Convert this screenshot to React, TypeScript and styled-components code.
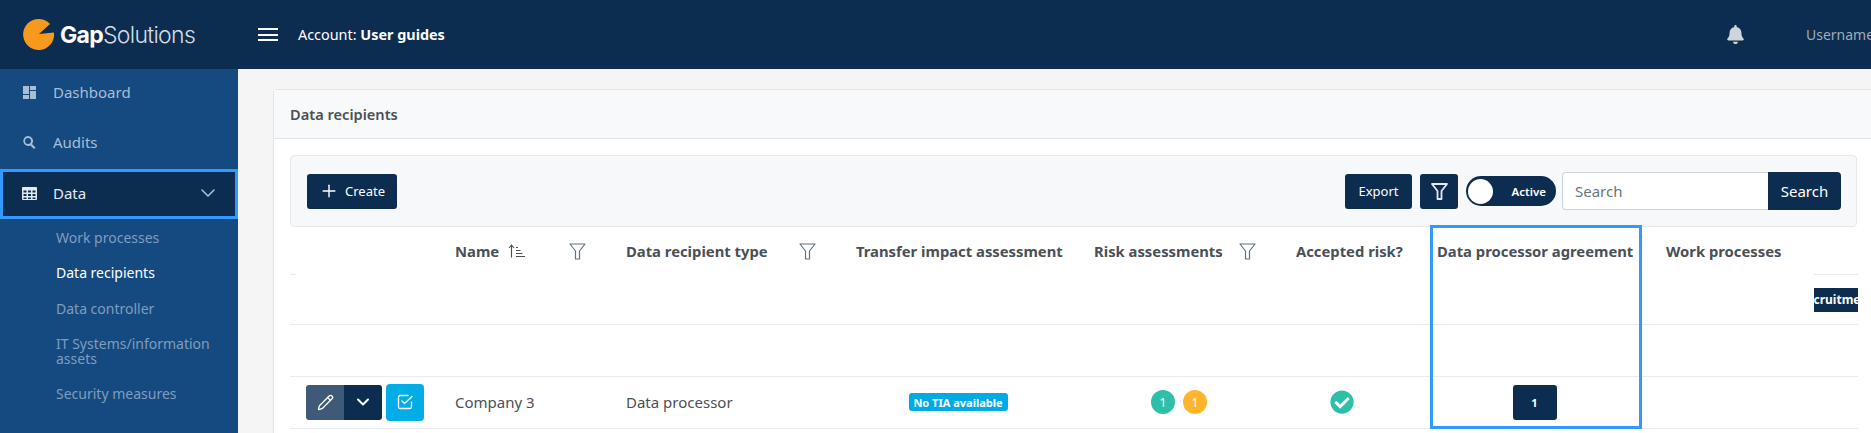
import React, { ReactElement } from 'react';
import styled, { createGlobalStyle } from 'styled-components';
import { FaBell, FaCheckCircle } from 'react-icons/fa';
import { ChevronDown, Pencil, Plus } from 'lucide-react';

const navy = '#0c2d50';
const line = '#e9ecef';

const GlobalStyle = createGlobalStyle`
  html, body {
    margin: 0;
    height: 433px;
    overflow: hidden;
    background: #f5f5f5;
    font-family: "Noto Sans", "Open Sans", sans-serif;
  }
  * { box-sizing: border-box; }
`;

const Page = styled.div`
  width: 1871px;
  height: 433px;
  overflow: hidden;
  display: flex;
  flex-direction: column;
`;

const TopBar = styled.header`
  height: 69px;
  flex: none;
  display: flex;
  align-items: center;
  background: ${navy};
  color: #fff;
`;

const Brand = styled.div`
  width: 258px;
  flex: none;
  display: flex;
  align-items: center;
  gap: 6px;
  padding-left: 23px;
`;

const BrandText = styled.span`
  font-family: Inter, sans-serif;
  font-size: 23px;
  font-weight: 300;
  letter-spacing: -0.7px;
  color: #d5dce4;
  b { font-weight: 700; color: #fff; }
`;

const Burger = styled.button`
  width: 20px;
  height: 13px;
  padding: 0;
  border: 0;
  border-top: 2px solid #fff;
  border-bottom: 2px solid #fff;
  background: linear-gradient(#fff, #fff) center / 100% 2px no-repeat;
`;

const Account = styled.div`
  margin-left: 20px;
  font-size: 14.4px;
  b { font-weight: 700; }
`;

const Spacer = styled.div`
  flex: 1;
`;

const Bell = styled.span`
  display: flex;
  color: #cfd5dd;
  font-size: 19px;
`;

const UserName = styled.span`
  width: 65px;
  margin-left: 61px;
  flex: none;
  overflow: hidden;
  white-space: nowrap;
  font-size: 14px;
  color: #9eabbb;
`;

const Body = styled.div`
  flex: 1;
  display: flex;
  min-height: 0;
`;

const Sidebar = styled.aside`
  width: 238px;
  flex: none;
  background: #154a80;
  overflow: hidden;
`;

const NavItem = styled.a<{ $active?: boolean }>`
  height: 50px;
  display: flex;
  align-items: center;
  padding: ${(p) => (p.$active ? '0 15px 2px 19px' : '0 15px 0 22px')};
  font-size: 15px;
  color: ${(p) => (p.$active ? '#e3e9f0' : '#a9bdd3')};
  background: ${(p) => (p.$active ? navy : 'transparent')};
  border: ${(p) => (p.$active ? '3px solid #3399ff' : '0')};
  margin-top: ${(p) => (p.$active ? '2px' : '0')};
`;

const NavList = styled.nav`
  margin-top: -2px;
`;

const NavIcon = styled.svg`
  width: 15px;
  height: 15px;
  flex: none;
  margin-right: 16px;
  fill: currentColor;
`;

const NavChevron = styled(ChevronDown)`
  margin-left: auto;
  color: #a9bdd3;
`;

const SubList = styled.div`
  margin-top: 1px;
  display: flex;
  flex-direction: column;
`;

const SubItem = styled.a<{ $active?: boolean }>`
  padding: 10px 24px 10px 56px;
  font-size: 14px;
  line-height: 15.3px;
  color: ${(p) => (p.$active ? '#fff' : '#7f9dbd')};
`;

const Main = styled.main`
  flex: 1;
  min-width: 0;
  overflow: hidden;
  padding: 20px 0 0 35px;
`;

const Card = styled.section`
  width: 1640px;
  height: 400px;
  background: #fff;
  border: 1px solid #e1e4e8;
  border-radius: 4px 0 0 0;
`;

const CardHeader = styled.div`
  height: 49px;
  padding-left: 16px;
  display: flex;
  align-items: center;
  background: #f8f9fa;
  border-bottom: 1px solid #e1e4e8;
  font-size: 14.6px;
  font-weight: 600;
  color: #495057;
`;

const CardBody = styled.div`
  padding: 16px 0 0 16px;
`;

const Toolbar = styled.div`
  width: 1567px;
  height: 72px;
  display: flex;
  align-items: center;
  padding: 0 15px 0 16px;
  background: #f7f8fa;
  border: 1px solid #e6e8ec;
  border-radius: 4px;
`;

const Button = styled.button`
  height: 35px;
  display: inline-flex;
  align-items: center;
  justify-content: center;
  padding: 0 14px;
  border: 0;
  border-radius: 3px;
  background: ${navy};
  color: #fff;
  font-family: inherit;
  font-size: 13px;
`;

const CreateButton = styled(Button)`
  width: 90px;
  gap: 6px;
  margin-right: auto;
  padding: 0;
`;

const ExportButton = styled(Button)`
  width: 67px;
  padding: 0;
  margin-right: 8px;
`;

const FilterButton = styled(Button)`
  width: 38px;
  padding: 0;
  margin-right: 8px;
  color: #e4e9ef;
`;

const Toggle = styled.div`
  width: 90px;
  height: 30px;
  margin-right: 6px;
  display: flex;
  align-items: center;
  justify-content: space-between;
  padding: 0 10px 0 2px;
  border-radius: 15px;
  background: ${navy};
  color: #fff;
  font-size: 11.5px;
  font-weight: 600;
`;

const Knob = styled.span`
  width: 25px;
  height: 25px;
  border-radius: 50%;
  background: #fff;
`;

const SearchGroup = styled.div`
  display: flex;
  height: 38px;
`;

const SearchInput = styled.input`
  width: 206px;
  height: 38px;
  padding: 0 12px;
  border: 1px solid #ced4da;
  border-right: 0;
  border-radius: 4px 0 0 4px;
  background: #fff;
  font-family: inherit;
  font-size: 15px;
  outline: none;
  &::placeholder { color: #6c757d; opacity: 1; }
`;

const SearchButton = styled(Button)`
  width: 73px;
  height: 38px;
  padding: 0;
  font-size: 15px;
  border-radius: 0 4px 4px 0;
`;

const TableWrap = styled.div`
  position: relative;
  width: 1568px;
`;

const Table = styled.table`
  width: 1568px;
  table-layout: fixed;
  border-collapse: collapse;
  font-size: 15px;
  color: #495057;
`;

const HeadCell = styled.th`
  height: 47px;
  padding: 1px 0 0 16px;
  text-align: left;
  font-size: 14.8px;
  font-weight: 700;
  white-space: nowrap;
`;

const HeadInner = styled.div`
  display: flex;
  align-items: center;
  justify-content: space-between;
  padding-right: 24px;
`;

const NameGroup = styled.span`
  display: flex;
  align-items: center;
  gap: 9px;
`;

const Row = styled.tr<{ $h: number; $ticks?: boolean }>`
  height: ${(p) => p.$h}px;
  border-bottom: 1px solid ${line};
  ${(p) => p.$ticks && `
    background:
      linear-gradient(${line}, ${line}) 0 0 / 6px 1px no-repeat,
      linear-gradient(${line}, ${line}) 100% 0 / 44px 1px no-repeat;
  `}
`;

const Cell = styled.td`
  padding: 0 0 0 16px;
`;

const EndCell = styled.td`
  padding: 2px 0 0;
  text-align: right;
`;

const Centered = styled.td<{ $shift?: number }>`
  padding: 0 ${(p) => p.$shift ?? 0}px 0 0;
`;

const CenterBox = styled.div<{ $gap?: number }>`
  display: flex;
  align-items: center;
  justify-content: center;
  gap: ${(p) => p.$gap ?? 0}px;
`;

const Tag = styled.div`
  width: 44px;
  height: 24px;
  margin: 0 0 0 auto;
  display: flex;
  align-items: center;
  justify-content: center;
  overflow: hidden;
  background: ${navy};
  color: #fff;
  font-size: 12px;
  font-weight: 700;
  span { flex: none; }
`;

const Actions = styled.div`
  display: flex;
  align-items: center;
`;

const ActionGroup = styled.div`
  display: flex;
  height: 35px;
  border-radius: 3px;
  overflow: hidden;
  margin-right: 4px;
`;

const ActionPart = styled.span<{ $tone: string }>`
  width: 38px;
  display: flex;
  align-items: center;
  justify-content: center;
  background: ${(p) => p.$tone};
  color: #fff;
`;

const CheckButton = styled.span`
  width: 38px;
  height: 37px;
  display: flex;
  align-items: center;
  justify-content: center;
  border-radius: 4px;
  background: #00ade6;
`;

const Badge = styled.span`
  width: 99px;
  height: 18px;
  display: flex;
  align-items: center;
  justify-content: center;
  border-radius: 3px;
  background: #00aae4;
  color: #fff;
  font-size: 11px;
  font-weight: 700;
  white-space: nowrap;
`;

const Dot = styled.span<{ $bg: string }>`
  width: 24px;
  height: 24px;
  display: flex;
  align-items: center;
  justify-content: center;
  border-radius: 50%;
  background: ${(p) => p.$bg};
  color: #fff;
  font-size: 13px;
`;

const Accepted = styled(FaCheckCircle)`
  color: #2ebfa8;
  font-size: 24px;
`;

const CountButton = styled(Button)`
  width: 44px;
  padding: 0;
  font-size: 11px;
  font-weight: 700;
`;

// the blue frame lies over the table, it marks one column in the guide
const Highlight = styled.div`
  position: absolute;
  left: 1140px;
  top: -2px;
  width: 212px;
  height: 204px;
  border: 3px solid #3399ff;
  pointer-events: none;
`;

const Logo = (): ReactElement => (
  <svg width="31" height="31" viewBox="0 0 31 31">
    <path d="M15.5 0A15.500 15.500 0 0 1 27 5L16 15 31 13.500A15.500 15.500 0 1 1 15.500 0Z" fill="#f7991c" />
  </svg>
);

const Funnel = ({ color = '#5f7186', weight = 1.2 }: { color?: string; weight?: number }): ReactElement => (
  <svg width="17" height="17" viewBox="0 0 17 17" fill="none" stroke={color} strokeWidth={weight} strokeLinejoin="round">
    <path d="M1 1h15l-5.500 7v8h-4V8z" />
  </svg>
);

const SortIcon = (): ReactElement => (
  <svg width="17" height="14" viewBox="0 0 17 14" fill="none" stroke="#495057" strokeWidth="1.100">
    <path d="M3.500 13.500V1.500M1 4l2.500-3L6 4" />
    <path d="M8 3.500h2M8 6.500h4.500M8 9.500h6.500M8 12.500h9" />
  </svg>
);

const CheckSquare = (): ReactElement => (
  <svg width="16" height="16" viewBox="0 0 16 16" fill="none" stroke="#fff" strokeWidth="1.300" strokeLinecap="round" strokeLinejoin="round">
    <path d="M14.500 8v5a1.500 1.500 0 0 1-1.500 1.500H3A1.500 1.500 0 0 1 1.500 13V3A1.500 1.500 0 0 1 3 1.500h8" />
    <path d="M5 7l2.500 2.500L15 2.500" />
  </svg>
);

const subItems = ['Work processes', 'Data recipients', 'Data controller', 'IT Systems/information assets', 'Security measures'];

const App = (): ReactElement => (
  <Page>
    <GlobalStyle />
    <TopBar>
      <Brand>
        <Logo />
        <BrandText><b>Gap</b>Solutions</BrandText>
      </Brand>
      <Burger aria-label="Menu" />
      <Account>Account: <b>User guides</b></Account>
      <Spacer />
      <Bell><FaBell /></Bell>
      <UserName>Username</UserName>
    </TopBar>
    <Body>
      <Sidebar>
        <NavList>
          <NavItem>
            <NavIcon viewBox="0 0 15 15"><path d="M1 1h6v8H1zM8 1h6v4H8zM8 6h6v8H8zM1 10h6v4H1z" /></NavIcon>
            Dashboard
          </NavItem>
          <NavItem>
            <NavIcon viewBox="0 0 15 15"><path d="M6 1a5 5 0 0 1 4 8l3.500 3.500-1.500 1.500L8.500 10.500A5 5 0 1 1 6 1zm0 2a3 3 0 1 0 0 6 3 3 0 0 0 0-6z" /></NavIcon>
            Audits
          </NavItem>
          <NavItem $active>
            <NavIcon viewBox="0 0 15 15"><path fillRule="evenodd" d="M1 1h13a1 1 0 0 1 1 1v11a1 1 0 0 1-1 1H1a1 1 0 0 1-1-1V2a1 1 0 0 1 1-1zm.5 3.500v2h3v-2zm4.500 0v2h3v-2zm4.500 0v2h3v-2zm-9 3.500v2h3V8zM6 8v2h3V8zm4.500 0v2h3V8zm-9 3.500v1.500h3v-1.500zm4.500 0v1.500h3v-1.500zm4.500 0v1.500h3v-1.500z" /></NavIcon>
            Data
            <NavChevron size={24} strokeWidth={1.600} />
          </NavItem>
        </NavList>
        <SubList>
          {subItems.map((item) => (
            <SubItem key={item} $active={item === 'Data recipients'}>{item}</SubItem>
          ))}
        </SubList>
      </Sidebar>
      <Main>
        <Card>
          <CardHeader>Data recipients</CardHeader>
          <CardBody>
            <Toolbar>
              <CreateButton><Plus size={20} strokeWidth={1.700} />Create</CreateButton>
              <ExportButton>Export</ExportButton>
              <FilterButton><Funnel color="#e4e9ef" weight={1.800} /></FilterButton>
              <Toggle><Knob />Active</Toggle>
              <SearchGroup>
                <SearchInput placeholder="Search" />
                <SearchButton>Search</SearchButton>
              </SearchGroup>
            </Toolbar>
            <TableWrap>
              <Table>
                <colgroup>
                  {[149, 171, 230, 238, 202, 141, 229, 208].map((w, i) => <col key={i} width={w} />)}
                </colgroup>
                <thead>
                  <tr>
                    <HeadCell />
                    <HeadCell><HeadInner><NameGroup>Name <SortIcon /></NameGroup><Funnel /></HeadInner></HeadCell>
                    <HeadCell><HeadInner>Data recipient type <Funnel /></HeadInner></HeadCell>
                    <HeadCell>Transfer impact assessment</HeadCell>
                    <HeadCell><HeadInner>Risk assessments <Funnel /></HeadInner></HeadCell>
                    <HeadCell>Accepted risk?</HeadCell>
                    <HeadCell>Data processor agreement</HeadCell>
                    <HeadCell>Work processes</HeadCell>
                  </tr>
                </thead>
                <tbody>
                  <Row $h={50} $ticks>
                    <Cell colSpan={7} />
                    <EndCell><Tag><span>Recruitment</span></Tag></EndCell>
                  </Row>
                  <Row $h={52}>
                    <Cell colSpan={8} />
                  </Row>
                  <Row $h={52}>
                    <Cell>
                      <Actions>
                        <ActionGroup>
                          <ActionPart $tone="#3f5a78"><Pencil size={17} strokeWidth={1.800} /></ActionPart>
                          <ActionPart $tone={navy}><ChevronDown size={20} strokeWidth={2.400} /></ActionPart>
                        </ActionGroup>
                        <CheckButton><CheckSquare /></CheckButton>
                      </Actions>
                    </Cell>
                    <Cell>Company 3</Cell>
                    <Cell>Data processor</Cell>
                    <Centered $shift={2}><CenterBox><Badge>No TIA available</Badge></CenterBox></Centered>
                    <Centered><CenterBox $gap={8}><Dot $bg="#2ebfa8">1</Dot><Dot $bg="#ffb52b">1</Dot></CenterBox></Centered>
                    <Centered $shift={18}><CenterBox><Accepted /></CenterBox></Centered>
                    <Centered $shift={2}><CenterBox><CountButton>1</CountButton></CenterBox></Centered>
                    <Cell />
                  </Row>
                </tbody>
              </Table>
              <Highlight />
            </TableWrap>
          </CardBody>
        </Card>
      </Main>
    </Body>
  </Page>
);

export default App;
